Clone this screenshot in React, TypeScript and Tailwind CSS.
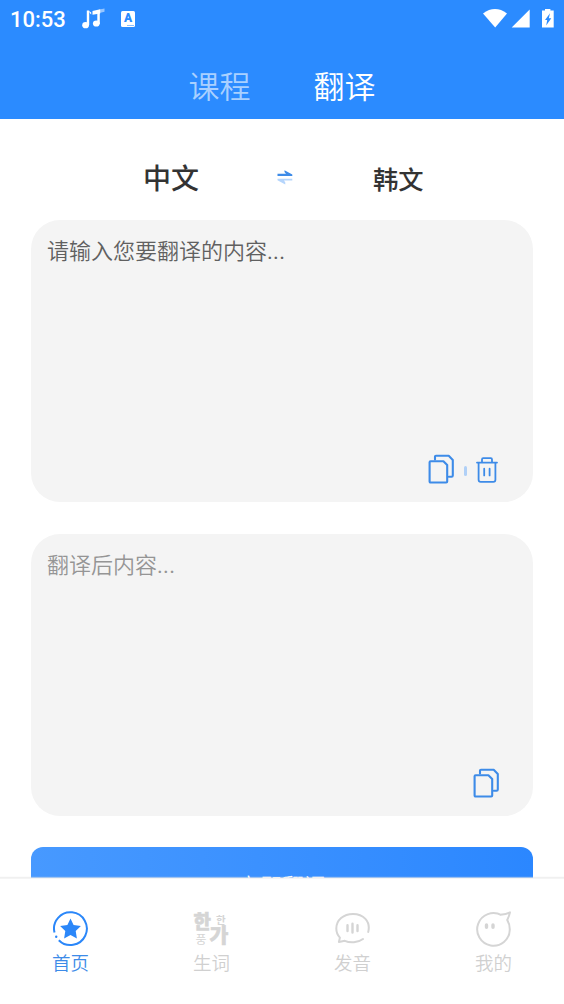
import type { ReactNode } from 'react'

const CopyIcon = () => (
  <svg width="26" height="30" viewBox="0 0 26 30" fill="none" stroke="#3d8be8" strokeWidth="2.1" strokeLinejoin="round" strokeLinecap="round">
    <path d="M7 5.5V2.8Q7 1.8 8 1.8H20.7L24.8 5.9V21.5Q24.8 22.7 23.6 22.7H20.8" />
    <path d="M1.6 8.2Q1.6 7.2 2.6 7.2H15.4L19.2 11V27.5Q19.2 28.5 18.2 28.5H2.6Q1.6 28.5 1.6 27.5Z" />
  </svg>
)

const TrashIcon = () => (
  <svg width="22" height="26" viewBox="0 0 22 26" fill="none" stroke="#3d8be8" strokeWidth="1.8" strokeLinejoin="round" strokeLinecap="round">
    <path d="M1 5.6H21M6 5.4V2.4Q6 1.2 7.2 1.2H14.8Q16 1.2 16 2.4V5.4" />
    <path d="M2.6 6V22.7Q2.6 24.8 4.7 24.8H17.3Q19.4 24.8 19.4 22.7V6" />
    <path d="M8.2 11.7V18.4M13.6 11.7V18.4" />
  </svg>
)

const SwapIcon = () => (
  <svg width="16" height="16" viewBox="0 0 16 16">
    <path d="M.5 3.8H9L7.5 2V.2L15.3 4.4V6H.5Z" fill="#3d8be8" />
    <path d="M15.3 10.6H7L8.3 12.6V14.6L.5 10.2V8.8H15.3Z" fill="#b5d5fc" />
  </svg>
)

const HomeIcon = () => (
  <svg width="36" height="36" viewBox="0 0 36 36" fill="none">
    <path d="M1.5 21.5A16.4 16.4 0 1 1 5.8 29.2" stroke="#2b87f9" strokeWidth="2" />
    <circle cx="3.2" cy="25.8" r="1.2" fill="#2b87f9" />
    <path d="M17.5 7.4L20.6 14L27.9 15L22.7 20.1L23.9 27.5L17.5 24.1L11.1 27.5L12.3 20.1L7.1 15L14.4 14Z" fill="#2b87f9" />
  </svg>
)

const WordsIcon = () => (
  <svg width="36" height="36" viewBox="0 0 36 36" fill="#d5d5d5" className="overflow-visible font-['Noto_Sans_CJK_KR',sans-serif]">
    <text x="-0.5" y="18" fontSize="19" fontWeight="900" stroke="#d5d5d5" strokeWidth=".5">한</text>
    <text x="22" y="13" fontSize="10.5" fontWeight="700">한</text>
    <text x="1.5" y="32.7" fontSize="12" fontWeight="400">풍</text>
    <text x="15.5" y="31.8" fontSize="20.5" fontWeight="900" stroke="#d5d5d5" strokeWidth=".5">가</text>
  </svg>
)

const VoiceIcon = () => (
  <svg width="36" height="36" viewBox="0 0 36 36" fill="none" stroke="#d5d5d5" strokeWidth="2" strokeLinecap="round" strokeLinejoin="round">
    <path d="M33.2 21C36 10 28 2.9 18 2.9C8.5 2.9 1.3 9 1.3 17.5C1.3 21.2 2.7 24.3 4.9 26.6L3.9 31L9.8 29.8C15 32.2 23 31.8 28 28" />
    <path d="M12.5 14.3V20M17.5 12.8V21.6M22.5 14.3V20" strokeWidth="2.4" />
  </svg>
)

const MineIcon = () => (
  <svg width="36" height="36" viewBox="0 0 36 36" fill="none" stroke="#d5d5d5" strokeWidth="2" strokeLinejoin="round">
    <path d="M24.3 3.8Q30.5 3.2 34 1.4Q33.2 5.2 31.2 9Q33.8 13 33.8 18.5A16.3 16.3 0 1 1 25.5 4.2" />
    <path d="M10.5 14V16.3M17 14V16.3" strokeWidth="3.4" strokeLinecap="round" />
  </svg>
)

const StatusBar = () => (
  <div className="flex h-[38px] items-center justify-between px-[10px]">
    <div className="flex items-center">
      <span className="w-[72px] pt-[2px] text-[22px] font-medium leading-none">10:53</span>
      <svg width="23" height="22" viewBox="0 0 23 22" fill="#fff">
        <ellipse cx="3.6" cy="17.2" rx="3.4" ry="3.1" />
        <ellipse cx="14.3" cy="15.5" rx="3.4" ry="3.1" />
        <path d="M4.8 2.5H7.2V17H4.8ZM15.3 4H17.8V16H15.3Z" />
        <path d="M7 3Q7.4 5.4 9.2 6.6V4.4ZM10.5 3L18.2 1.2V5.4L10.5 6.8Z" />
        <path d="M17.5 1.4L22.5 0.4V3.8L17.5 5Z" opacity=".5" />
      </svg>
      <div className="ml-4 flex h-4 w-[14px] flex-col items-center rounded-[1.5px] bg-white text-[#2b8bff]">
        <span className="text-[12px] font-black leading-[14px]">A</span>
        <span className="mr-px h-px w-[7px] self-end bg-[#8abfff]" />
      </div>
    </div>
    <svg width="71" height="20" viewBox="0 0 71 20" fill="#fff">
      <path d="M0 4.5Q12 -4.3 24 4.5L12.2 18.4Z" />
      <path d="M46.7 .6V18.4H28.7Z" />
      <path d="M59 1.6H62V-.2H67.4V1.6H70.7V18.4H59Z" />
      <path d="M67 4.2L62 11H64.2L63.2 16.4L68.3 9.2H65.8Z" fill="#2b8bff" />
    </svg>
  </div>
)

interface NavItemProps { label: string; icon: ReactNode; active?: boolean }

const NavItem = ({ label, icon, active }: NavItemProps) => (
  <div className={`flex flex-1 flex-col items-center pt-[31.5px] ${active ? 'text-[#3d8be8]' : 'text-[#d0d0d0]'}`}>
    {icon}
    <span className="mt-[5px] text-[18.5px] font-[350] leading-6">{label}</span>
  </div>
)

export default function App() {
  return (
    <div className="flex h-[1004px] w-[564px] flex-col overflow-hidden bg-white font-['Roboto','Noto_Sans_CJK_SC',sans-serif]">
      <header className="h-[119px] shrink-0 bg-[#2b8bff] text-white">
        <StatusBar />
        <div className="flex justify-center gap-[63px] pt-[27px] text-[31px] font-[350] leading-[46px]">
          <span className="text-[#a9d0ff]">课程</span>
          <span>翻译</span>
        </div>
      </header>

      <main className="flex min-h-0 flex-1 flex-col overflow-hidden px-[31px]">
        <div className="flex h-[101px] shrink-0 items-center pl-[112px] pt-4 font-medium text-[#333]">
          <span className="w-[134px] pt-[4px] text-[28px] leading-10">中文</span>
          <SwapIcon />
          <span className="ml-[80px] pt-[7px] text-[25.3px] leading-10">韩文</span>
        </div>

        <section className="flex h-[282px] shrink-0 flex-col justify-between rounded-[29px] bg-[#f4f4f4] pb-[18px] pl-4 pr-[35px] pt-[15px]">
          <p className="text-[22px] font-[350] leading-[34px] text-[#606060]">请输入您要翻译的内容<span className="font-normal tracking-[0.3px]">...</span></p>
          <div className="flex items-center justify-end">
            <CopyIcon />
            <span className="ml-[10px] mr-[9px] mt-1 h-[10px] w-[3px] rounded-full bg-[#b0d0f7]" />
            <div className="pt-[2px]"><TrashIcon /></div>
          </div>
        </section>

        <section className="mt-8 flex h-[282px] shrink-0 flex-col justify-between rounded-[29px] bg-[#f4f4f4] pb-[18px] pl-4 pr-[34px] pt-[15px]">
          <p className="text-[22px] font-[350] leading-[34px] text-[#959595]">翻译后内容<span className="font-normal tracking-[0.3px]">...</span></p>
          <div className="flex justify-end">
            <CopyIcon />
          </div>
        </section>

        <button className="mt-[31px] h-[79px] shrink-0 rounded-xl bg-linear-to-r from-[#4799ff] to-[#2b87ff] text-[22px] font-[350] text-white">
          立即翻译
        </button>
      </main>

      <nav className="flex h-[126px] shrink-0 border-t border-[#f4f4f4] bg-white shadow-[0_-1px_1px_rgba(230,230,230,0.6)]">
        <NavItem label="首页" icon={<HomeIcon />} active />
        <NavItem label="生词" icon={<WordsIcon />} />
        <NavItem label="发音" icon={<VoiceIcon />} />
        <NavItem label="我的" icon={<MineIcon />} />
      </nav>
    </div>
  )
}
